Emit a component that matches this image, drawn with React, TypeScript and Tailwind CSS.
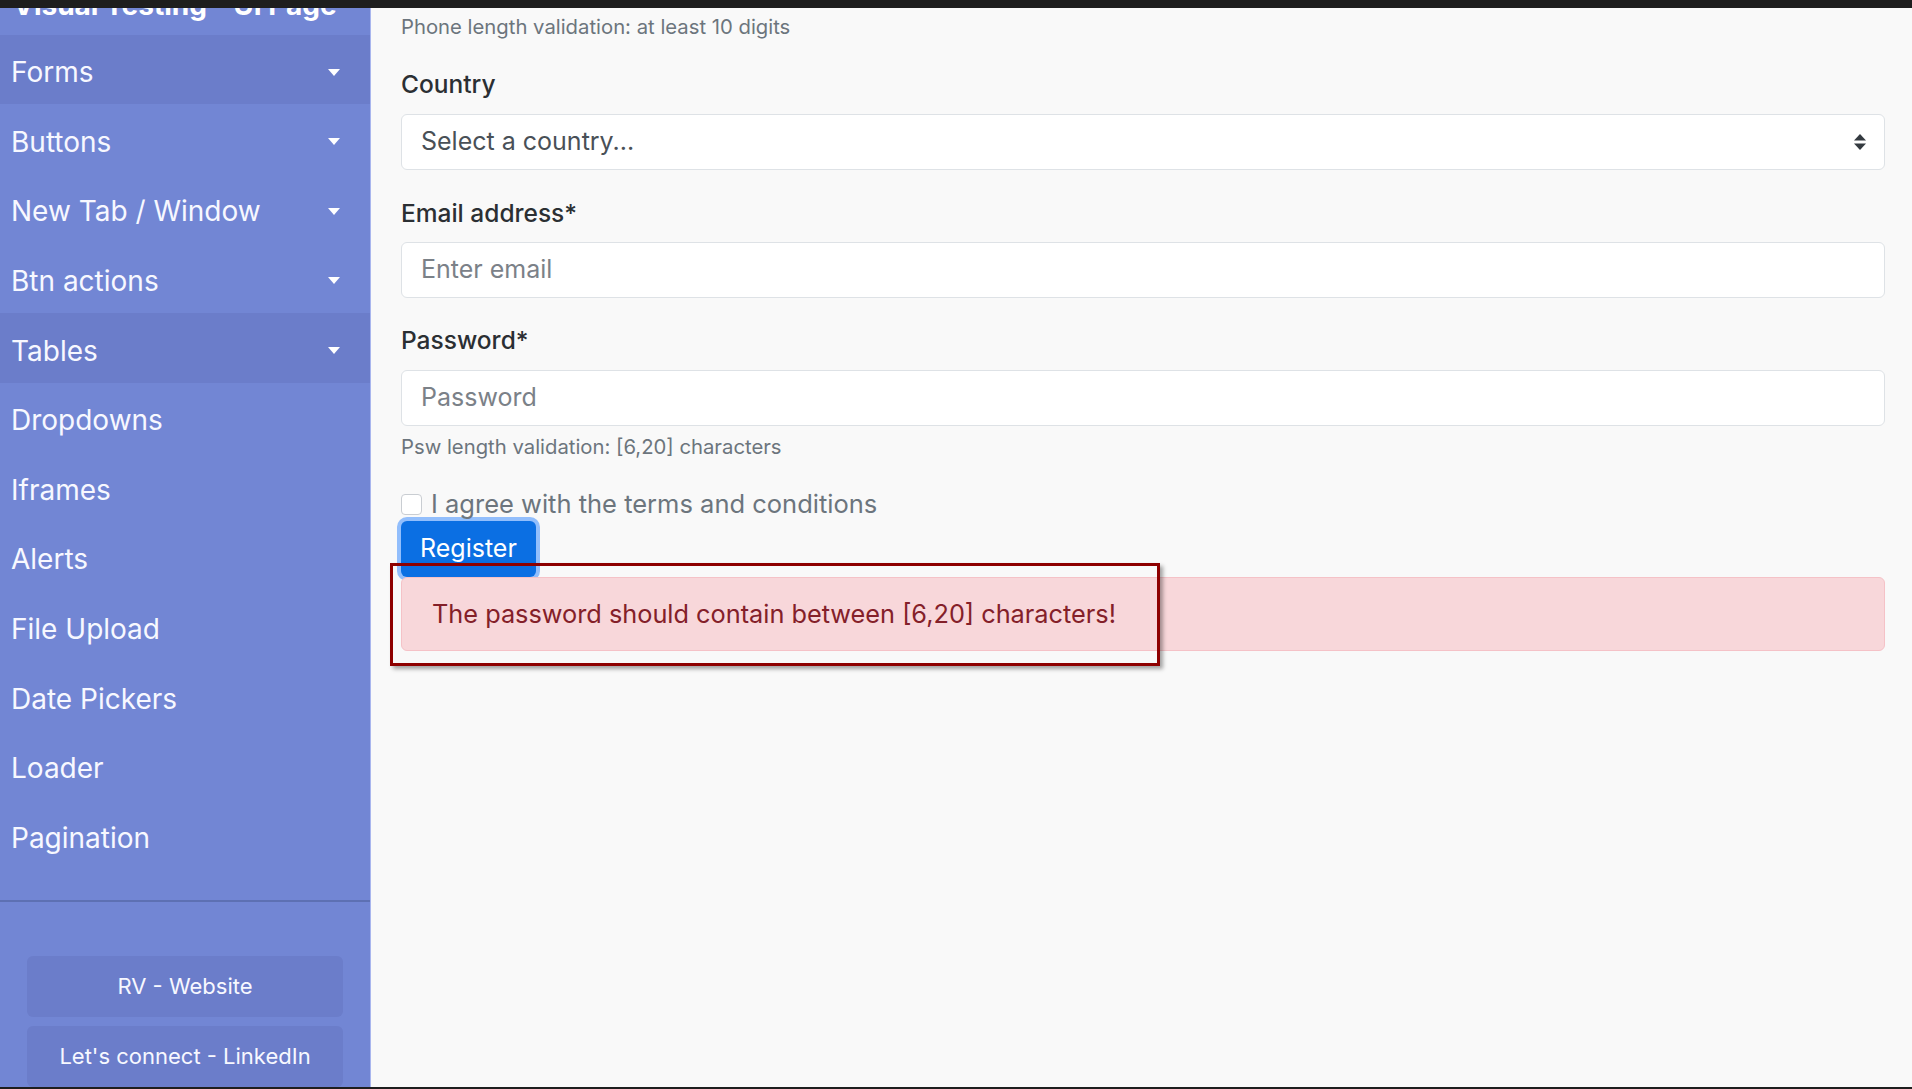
import React from 'react';

const menuItems = [
  { label: 'Forms', caret: true, active: true },
  { label: 'Buttons', caret: true },
  { label: 'New Tab / Window', caret: true },
  { label: 'Btn actions', caret: true },
  { label: 'Tables', caret: true, active: true },
  { label: 'Dropdowns' },
  { label: 'Iframes' },
  { label: 'Alerts' },
  { label: 'File Upload' },
  { label: 'Date Pickers' },
  { label: 'Loader' },
  { label: 'Pagination' },
];

const Caret = () => (
  <span className="h-0 w-0 border-x-[6px] border-t-[7px] border-x-transparent border-t-white" />
);

const SelectArrows = () => (
  <svg width="14" height="18" viewBox="0 0 14 18" className="text-[#343a40]">
    <path d="M7 1 L13 7.5 H1 Z" fill="currentColor" />
    <path d="M7 17 L13 10.5 H1 Z" fill="currentColor" />
  </svg>
);

const Sidebar: React.FC = () => (
  <aside className="flex w-[371px] shrink-0 flex-col border-r border-[#a9b6ee] bg-[#7286d4] text-white">
    <div className="h-[28px] overflow-hidden">
      <div className="-mt-[20px] pl-[13px] text-[28px] font-bold leading-[34px] whitespace-nowrap">
        Visual Testing - UI Page
      </div>
    </div>
    <nav className="flex flex-col">
      {menuItems.map((item) => (
        <div
          key={item.label}
          className={
            item.active
              ? 'flex h-[69.6px] items-center justify-between bg-[#6b7dca] pt-[5px] pl-[11px] pr-[30px]'
              : 'flex h-[69.6px] items-center justify-between pt-[5px] pl-[11px] pr-[30px]'
          }
        >
          <span className="text-[28px] text-[#f7f8ff]">{item.label}</span>
          {item.caret && <Caret />}
        </div>
      ))}
    </nav>
    <div className="mt-[30px] border-t-2 border-[#5d70b3]" />
    <div className="mt-[54px] flex flex-col gap-[9px] px-[27px]">
      <div className="flex h-[61px] items-center justify-center rounded-[6px] bg-[#6b7dca] text-[22px] text-[#f7f8ff]">
        RV - Website
      </div>
      <div className="flex h-[61px] items-center justify-center rounded-[6px] bg-[#6b7dca] text-[22px] text-[#f7f8ff]">
        Let's connect - LinkedIn
      </div>
    </div>
  </aside>
);

const inputClass =
  'flex h-[56px] w-full items-center rounded-[6px] border border-[#dee2e6] bg-white pl-[19px] pr-[17px] text-[25px]';

const FormPanel: React.FC = () => (
  <main className="flex-1 overflow-hidden bg-[#f9f9f9] pl-[30px] pr-[27px]">
    <div className="mt-[4px] text-[20.3px] leading-[30px] text-[#6c757d]">
      Phone length validation: at least 10 digits
    </div>

    <div className="mt-[24px] text-[24.5px] leading-[36px] font-medium text-[#2b2f33]">Country</div>
    <div className={`mt-[12px] justify-between ${inputClass} text-[#495057]`}>
      <span>Select a country...</span>
      <SelectArrows />
    </div>

    <div className="mt-[25px] text-[24.5px] leading-[36px] font-medium text-[#2b2f33]">Email address*</div>
    <div className={`mt-[11px] ${inputClass} text-[#7b8188]`}>Enter email</div>

    <div className="mt-[24px] text-[24.5px] leading-[36px] font-medium text-[#2b2f33]">Password*</div>
    <div className={`mt-[12px] ${inputClass} text-[#7b8188]`}>Password</div>
    <div className="mt-[6px] text-[20.3px] leading-[30px] text-[#6c757d]">
      Psw length validation: [6,20] characters
    </div>

    <div className="mt-[25px] flex h-[34px] items-center gap-[9px]">
      <span className="h-[21px] w-[21px] rounded-[4px] border border-[#c9cdd2] bg-white" />
      <span className="text-[25.5px] text-[#6c757d]">I agree with the terms and conditions</span>
    </div>

    <button
      type="button"
      className="flex h-[56px] items-center rounded-[6px] bg-[#0b6fe3] px-[19px] text-[25px] text-white shadow-[0_0_0_4px_rgba(77,150,253,0.6)]"
    >
      Register
    </button>

    <div className="relative">
      <div className="flex h-[74px] items-center rounded-[6px] border border-[#f5c2c7] bg-[#f8d7da] pl-[30px] text-[25.3px] text-[#842029]">
        The password should contain between [6,20] characters!
      </div>
      <div className="absolute -top-[14px] -left-[11px] h-[103px] w-[770px] border-[3px] border-[#8e0000] shadow-[3px_3px_4px_rgba(0,0,0,0.35)]" />
    </div>
  </main>
);

export default function App() {
  return (
    <div className="flex h-[1089px] flex-col bg-[#1e1e1e] font-['Inter','Noto_Sans',sans-serif]">
      <div className="h-[8px] shrink-0" />
      <div className="flex flex-1 overflow-hidden">
        <Sidebar />
        <FormPanel />
      </div>
      <div className="h-[2px] shrink-0" />
    </div>
  );
}
